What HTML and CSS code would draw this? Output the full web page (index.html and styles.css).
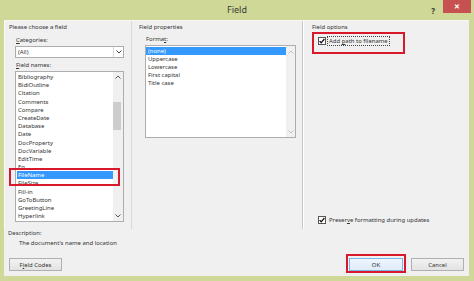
FILE: index.html
```html
<!DOCTYPE html>
<html>
<head>
<meta charset="utf-8">
<link rel="stylesheet" href="styles.css">
</head>
<body>
<div class="window">
  <div class="titlebar">
    <div></div>
    <div class="title">Field</div>
    <div class="controls"><span class="help">?</span><span class="close">&#x2715;</span></div>
  </div>
  <div class="client">
    <div class="top">
      <div class="col-left">
        <div class="group-label">Please choose a field</div>
        <div class="label lbl-cat"><u>C</u>ategories:</div>
        <div class="combo">
          <span class="combo-text">(All)</span>
          <span class="combo-btn"><svg width="6" height="4" viewBox="0 0 6 4"><polyline points="0.5,0.5 3,3 5.5,0.5" fill="none" stroke="#444" stroke-width="1"/></svg></span>
        </div>
        <div class="label lbl-names"><u>F</u>ield names:</div>
        <div class="listbox names">
          <div class="items">
            <div class="item">Bibliography</div>
            <div class="item">BidiOutline</div>
            <div class="item">Citation</div>
            <div class="item">Comments</div>
            <div class="item">Compare</div>
            <div class="item">CreateDate</div>
            <div class="item">Database</div>
            <div class="item">Date</div>
            <div class="item">DocProperty</div>
            <div class="item">DocVariable</div>
            <div class="item">EditTime</div>
            <div class="item">Eq</div>
            <div class="item selected">FileName</div>
            <div class="item">FileSize</div>
            <div class="item">Fill-in</div>
            <div class="item">GoToButton</div>
            <div class="item">GreetingLine</div>
            <div class="item">Hyperlink</div>
          </div>
          <div class="scrollbar">
            <div class="arrow"><svg width="6" height="4" viewBox="0 0 6 4"><polyline points="0.5,3.5 3,1 5.5,3.5" fill="none" stroke="#5a5a5a" stroke-width="1"/></svg></div>
            <div class="track"><div class="thumb"></div></div>
            <div class="arrow"><svg width="6" height="4" viewBox="0 0 6 4"><polyline points="0.5,0.5 3,3 5.5,0.5" fill="none" stroke="#5a5a5a" stroke-width="1"/></svg></div>
          </div>
        </div>
        <div class="annot annot-filename"></div>
      </div>
      <div class="group group-props">
        <div class="group-label props-label">Field properties</div>
        <div class="label lbl-format">Forma<u>t</u>:</div>
        <div class="listbox formats">
          <div class="items">
            <div class="item selected">(none)</div>
            <div class="item">Uppercase</div>
            <div class="item">Lowercase</div>
            <div class="item">First capital</div>
            <div class="item">Title case</div>
          </div>
          <div class="scrollbar disabled">
            <div class="arrow"><svg width="6" height="4" viewBox="0 0 6 4"><polyline points="0.5,3.5 3,1 5.5,3.5" fill="none" stroke="#c2c2c2" stroke-width="1"/></svg></div>
            <div class="track"></div>
            <div class="arrow"><svg width="6" height="4" viewBox="0 0 6 4"><polyline points="0.5,0.5 3,3 5.5,0.5" fill="none" stroke="#c2c2c2" stroke-width="1"/></svg></div>
          </div>
        </div>
      </div>
      <div class="group group-options">
        <div class="group-label options-label">Field options</div>
        <div class="check-row row-path">
          <span class="checkbox"><svg width="6" height="6" viewBox="0 0 6 6"><polyline points="0.6,3.1 2.2,4.8 5.4,1" fill="none" stroke="#111" stroke-width="1.3"/></svg></span>
          <span class="focus">Add <u>p</u>ath to filename</span>
        </div>
        <div class="check-row row-preserve">
          <span class="checkbox"><svg width="6" height="6" viewBox="0 0 6 6"><polyline points="0.6,3.1 2.2,4.8 5.4,1" fill="none" stroke="#111" stroke-width="1.3"/></svg></span>
          <span class="check-text">Preser<u>v</u>e formatting during updates</span>
        </div>
        <div class="annot annot-path"></div>
      </div>
    </div>
    <div class="description">
      <div class="desc-label">Description:</div>
      <div class="desc-text">The document's name and location</div>
    </div>
    <div class="buttons">
      <div class="button">F<u>i</u>eld Codes</div>
      <div class="ok-wrap"><div class="button default">OK</div></div>
      <div class="button cancel">Cancel</div>
    </div>
  </div>
</div>
</body>
</html>
```
FILE: styles.css
```css
* { box-sizing: border-box; }
html, body { margin: 0; padding: 0; }
body {
  width: 474px;
  height: 281px;
  overflow: hidden;
  background: #cfd896;
  font-family: "Noto Sans", "Open Sans", sans-serif;
  font-size: 5.95px;
  color: #333333;
}
u { text-decoration-thickness: 0.5px; text-underline-offset: 1px; }
.window { display: flex; flex-direction: column; width: 474px; height: 281px; }

.titlebar {
  height: 20px;
  display: grid;
  grid-template-columns: 1fr auto 1fr;
}
.title { font-size: 9px; line-height: 20px; color: #3a3a3a; }
.controls { display: flex; justify-content: flex-end; align-items: flex-start; padding-right: 3px; }
.help { font-size: 8px; line-height: 21px; font-weight: bold; color: #333; margin-right: 8px; }
.close {
  width: 28px; height: 13px;
  background: #c75050; color: #fff;
  display: flex; align-items: center; justify-content: center;
  font-size: 7px; font-weight: bold;
}

.client {
  flex: 1;
  margin: 0 5px 5px 4px;
  background: #f0f0f0;
  border-top: 1px solid #f6f6f2;
  display: flex;
  flex-direction: column;
}
.top { display: flex; height: 208px; }

.group-label, .label { line-height: 8px; height: 8px; white-space: nowrap; }

.col-left {
  width: 127px;
  position: relative;
  padding-top: 2px;
  display: flex;
  flex-direction: column;
  border-left: 1px solid #fafafa;
}
.col-left .group-label { margin-left: 4px; }
.lbl-cat { margin: 5px 0 0 11px; }
.combo {
  margin: 2px 0 0 10px;
  width: 109px; height: 12px;
  background: #fff;
  border: 1px solid #adadad;
  display: flex;
  align-items: center;
  justify-content: space-between;
}
.combo-text { padding-left: 2px; line-height: 8px; }
.combo-btn {
  width: 10px; height: 10px;
  border-left: 1px solid #d6d6d6;
  display: flex; align-items: center; justify-content: center;
}
.lbl-names { margin: 3px 0 0 11px; }

.listbox {
  background: #fff;
  border: 1px solid #adadad;
  display: flex;
}
.listbox .items { flex: 1; }
.item { line-height: 8.2px; height: 8.2px; padding-left: 2px; white-space: nowrap; }
.item.selected { background: #3399ff; color: #fff; }
.names { margin: 2px 0 0 10px; width: 109px; height: 151px; }
.names .items { padding-top: 1px; }
.names .item { margin-left: 1px; padding-left: 1px; }
.scrollbar { width: 10px; display: flex; flex-direction: column; background: #f0f0f0; }
.scrollbar .arrow { height: 10px; display: flex; align-items: center; justify-content: center; }
.scrollbar .track { flex: 1; padding-top: 20px; }
.thumb { width: 8px; height: 28px; margin-left: 0; background: #cdcdcd; }
.names .scrollbar .arrow:last-child { height: 11px; }

.group { display: flex; flex-direction: column; padding-top: 2px; position: relative; }
.group-props {
  width: 172px;
  border-left: 1px solid #dadada;
  border-right: 1px solid #c8c8c8;
}
.props-label { margin-left: 7px; }
.lbl-format { margin: 4px 0 0 14px; }
.formats { margin: 2px 0 0 13px; width: 151px; height: 93px; }
.formats .items { padding-top: 0.6px; }
.formats .scrollbar { width: 9px; }
.formats .scrollbar .arrow { height: 11px; }

.group-options {
  flex: 1;
  border-left: 1px solid #ffffff;
  padding-bottom: 5px;
}
.options-label { margin-left: 8px; }
.check-row { display: flex; align-items: center; margin-left: 14px; white-space: nowrap; }
.checkbox {
  width: 8px; height: 8px;
  background: #fff;
  border: 1px solid #555;
  display: flex; align-items: center; justify-content: center;
}
.row-path { margin-top: 5px; height: 10px; }
.focus { margin-left: 1px; border: 1px dotted #444; padding: 0 1px; line-height: 8px; }
.row-preserve { margin-top: auto; height: 9px; }
.check-text { margin-left: 3px; line-height: 8px; }

.annot { position: absolute; border: 2px solid #d7192b; }
.annot-filename { left: 4px; top: 147px; width: 111px; height: 18px; }
.annot-path { left: 8px; top: 11px; width: 93px; height: 22px; }

.description { padding-left: 4px; }
.desc-label { line-height: 8px; }
.desc-text { margin: 2px 0 0 11px; line-height: 8px; }

.buttons {
  display: flex;
  align-items: center;
  margin-top: 11px;
  padding: 0 5px 0 5px;
}
.button {
  width: 53px; height: 13px;
  border: 1px solid #b0b0b0;
  background: linear-gradient(#f2f2f2, #e3e3e3);
  display: flex; align-items: center; justify-content: center;
  line-height: 8px;
}
.ok-wrap { margin-left: auto; position: relative; }
.ok-wrap::after {
  content: "";
  position: absolute;
  left: -3px; right: -3px; top: -4px; bottom: -2px;
  border: 2px solid #d7192b;
}
.button.default {
  width: 54px;
  border-color: #7eb4ea;
  background: linear-gradient(#eef5fc, #dfecfa);
}
.button.cancel { margin-left: 8px; }
```
